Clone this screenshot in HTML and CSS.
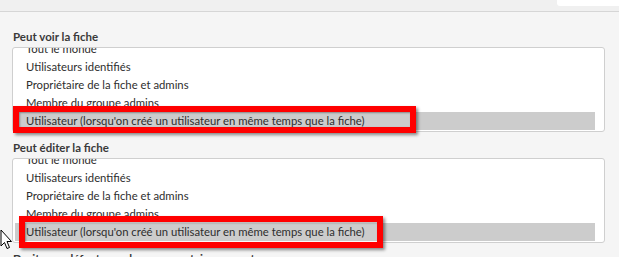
FILE: index.html
```html
<!DOCTYPE html>
<html lang="fr">
<head>
  <meta charset="UTF-8" />
  <title>Droits de la fiche</title>
  <link rel="stylesheet" href="styles.css">
</head>
<body>
<div class="topbar">
  <div class="tab"></div>
</div>

<main class="panel">
  <div class="field">
    <label class="field-label">Peut voir la fiche</label>
    <div class="listwrap">
      <div class="listbox">
        <ul>
          <li>Tout le monde</li>
          <li>Utilisateurs identifiés</li>
          <li>Propriétaire de la fiche et admins</li>
          <li>Membre du groupe admins</li>
          <li class="selected">Utilisateur (lorsqu'on créé un utilisateur en même temps que la fiche)</li>
        </ul>
      </div>
      <div class="mark mark-one"></div>
    </div>
  </div>

  <div class="field">
    <label class="field-label">Peut éditer la fiche</label>
    <div class="listwrap">
      <div class="listbox">
        <ul>
          <li>Tout le monde</li>
          <li>Utilisateurs identifiés</li>
          <li>Propriétaire de la fiche et admins</li>
          <li>Membre du groupe admins</li>
          <li class="selected">Utilisateur (lorsqu'on créé un utilisateur en même temps que la fiche)</li>
        </ul>
      </div>
      <div class="mark mark-two"></div>
    </div>
  </div>

  <div class="field">
    <label class="field-label">Droits par défaut pour les commentaires ouverts</label>
  </div>
</main>

<svg class="cursor" width="13" height="21" viewBox="0 0 13 21">
  <path d="M1 1 L1 17 L4.5 13.5 L7 19.5 L9.5 18.5 L7 12.5 L11.5 12.5 Z" fill="#fff" stroke="#000" stroke-width="1" stroke-linejoin="miter"/>
</svg>
</body>
</html>
```

FILE: styles.css
```css
body {
  font-family: 'Lato', 'Open Sans', sans-serif;
  background-color: #f5f5f5;
  color: #333;
  margin: 0;
  overflow: hidden;
}

.topbar {
  height: 11px;
  background-color: #f0f0f0;
  border-bottom: 1px solid #d6d6d6;
  display: flex;
  justify-content: flex-end;
}

.tab {
  width: 62px;
  height: 6px;
  background-color: #fff;
  border-bottom-left-radius: 3px;
}

.panel {
  padding: 17px 14px 0 12px;
}

.field {
  margin-bottom: 8px;
}

.field-label {
  display: block;
  font-size: 11.5px;
  font-weight: bold;
  line-height: 15px;
  margin: 0 0 3px 1px;
  color: #3a3a3a;
}

.listwrap {
  position: relative;
}

.listbox {
  height: 83px;
  background-color: #fff;
  border: 1px solid #cfcfcf;
  border-radius: 3px;
  overflow: hidden;
  padding: 0 9px 0 2px;
}

.listbox ul {
  list-style: none;
  margin: -8px 0 0 0;
  padding: 0;
}

.listbox li {
  height: 18px;
  line-height: 18px;
  font-size: 11.3px;
  padding-left: 11px;
  white-space: nowrap;
  color: #2e2e2e;
}

.listbox li.selected {
  background-color: #cccccc;
}

/* red annotation boxes drawn over the screenshot */
.mark {
  position: absolute;
  box-sizing: border-box;
  border: 6px solid #ff0000;
  box-shadow: 2px 2px 3px rgba(0, 0, 0, 0.45), inset 1px 1px 2px rgba(0, 0, 0, 0.35);
}

.mark-one {
  left: 1px;
  top: 59px;
  width: 403px;
  height: 27px;
}

.mark-two {
  left: 7px;
  top: 58px;
  width: 364px;
  height: 32px;
}

.cursor {
  position: absolute;
  left: 0;
  top: 229px;
}
```
